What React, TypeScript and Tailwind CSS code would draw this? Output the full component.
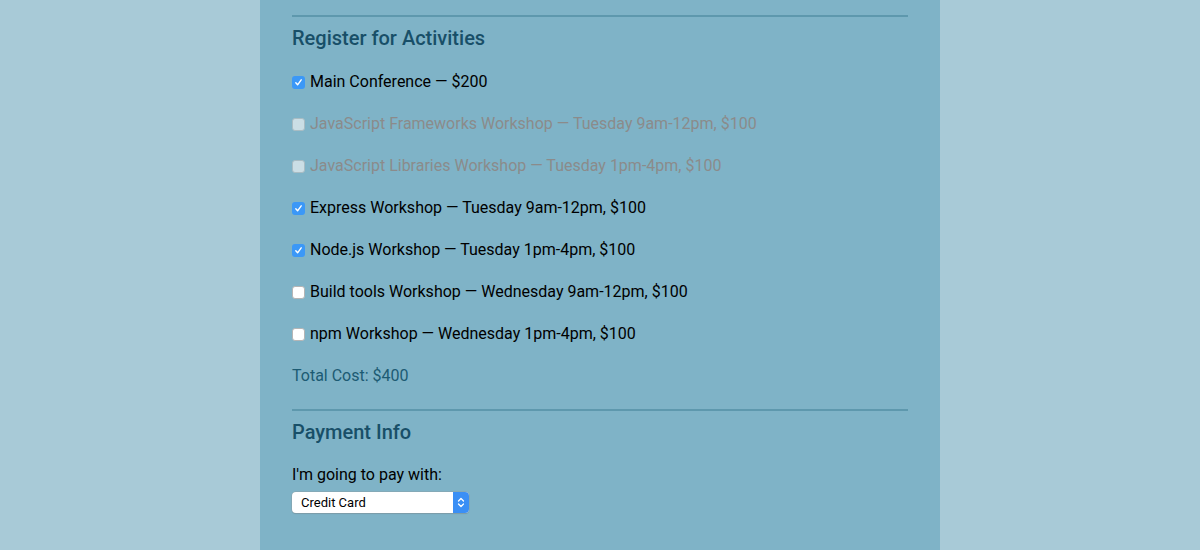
import { useState } from 'react';

type Activity = { name: string; checked: boolean; disabled?: boolean };

const initial: Activity[] = [
  { name: 'Main Conference — $200', checked: true },
  { name: 'JavaScript Frameworks Workshop — Tuesday 9am-12pm, $100', checked: false, disabled: true },
  { name: 'JavaScript Libraries Workshop — Tuesday 1pm-4pm, $100', checked: false, disabled: true },
  { name: 'Express Workshop — Tuesday 9am-12pm, $100', checked: true },
  { name: 'Node.js Workshop — Tuesday 1pm-4pm, $100', checked: true },
  { name: 'Build tools Workshop — Wednesday 9am-12pm, $100', checked: false },
  { name: 'npm Workshop — Wednesday 1pm-4pm, $100', checked: false },
];

function Box({ checked, disabled }: { checked: boolean; disabled?: boolean }) {
  if (checked) {
    return (
      <span className="w-[13px] h-[13px] rounded-[3px] bg-[#3b98f7] flex items-center justify-center shrink-0">
        <svg width="9" height="9" viewBox="0 0 9 9" fill="none">
          <path d="M1.8 4.8 L3.6 6.8 L7.2 1.8" stroke="white" strokeWidth="1.4" strokeLinecap="round" strokeLinejoin="round" />
        </svg>
      </span>
    );
  }
  return (
    <span
      className={
        disabled
          ? 'w-[13px] h-[13px] rounded-[3px] bg-[#cbdee5] border border-[#a9bcc3] shrink-0'
          : 'w-[13px] h-[13px] rounded-[3px] bg-white border border-[#b5b5b5] shrink-0'
      }
    />
  );
}

export default function App() {
  const [items] = useState(initial);
  const total = 400;

  return (
    <div className="min-h-[550px] bg-[#a8cad7] flex justify-center" style={{ fontFamily: 'Roboto, "Liberation Sans", sans-serif' }}>
      <div className="w-[680px] bg-[#7fb3c7] px-8 pt-[15px] pb-10">
        <div className="border-t-2 border-[#5e98ad]" />
        <h2 className="mt-[9px] text-[20px] leading-6 font-medium text-[#184f68]">Register for Activities</h2>

        <div className="mt-[22px] flex flex-col gap-[22px]">
          {items.map((a) => (
            <label key={a.name} className="flex items-center gap-[5px] h-5 text-[16px] leading-5">
              <Box checked={a.checked} disabled={a.disabled} />
              <span className={a.disabled ? 'text-[#8b8b8b]' : 'text-black'}>{a.name}</span>
            </label>
          ))}
          <p className="h-5 text-[16px] leading-5 text-[#1c5b73]">Total Cost: ${total}</p>
        </div>

        <div className="mt-[23px] border-t-2 border-[#5e98ad]" />
        <h2 className="mt-[9px] text-[20px] leading-6 font-medium text-[#184f68]">Payment Info</h2>

        <p className="mt-[21px] text-[16px] leading-5 text-black">I'm going to pay with:</p>
        <div className="mt-[7px] w-[177px] h-[21px] flex rounded-[4px] bg-white shadow-[0_0_0_0.5px_#8aa0a8,0_1px_1px_rgba(0,0,0,0.15)] overflow-hidden">
          <span className="flex-1 pl-[9px] text-[13px] leading-[21px] text-black">Credit Card</span>
          <span className="w-[16px] h-full bg-[#3a8ff5] flex items-center justify-center">
            <svg width="8" height="13" viewBox="0 0 8 13" fill="none">
              <path d="M1.5 5 L4 2.5 L6.5 5" stroke="white" strokeWidth="1.3" strokeLinecap="round" strokeLinejoin="round" />
              <path d="M1.5 8 L4 10.5 L6.5 8" stroke="white" strokeWidth="1.3" strokeLinecap="round" strokeLinejoin="round" />
            </svg>
          </span>
        </div>
      </div>
    </div>
  );
}
